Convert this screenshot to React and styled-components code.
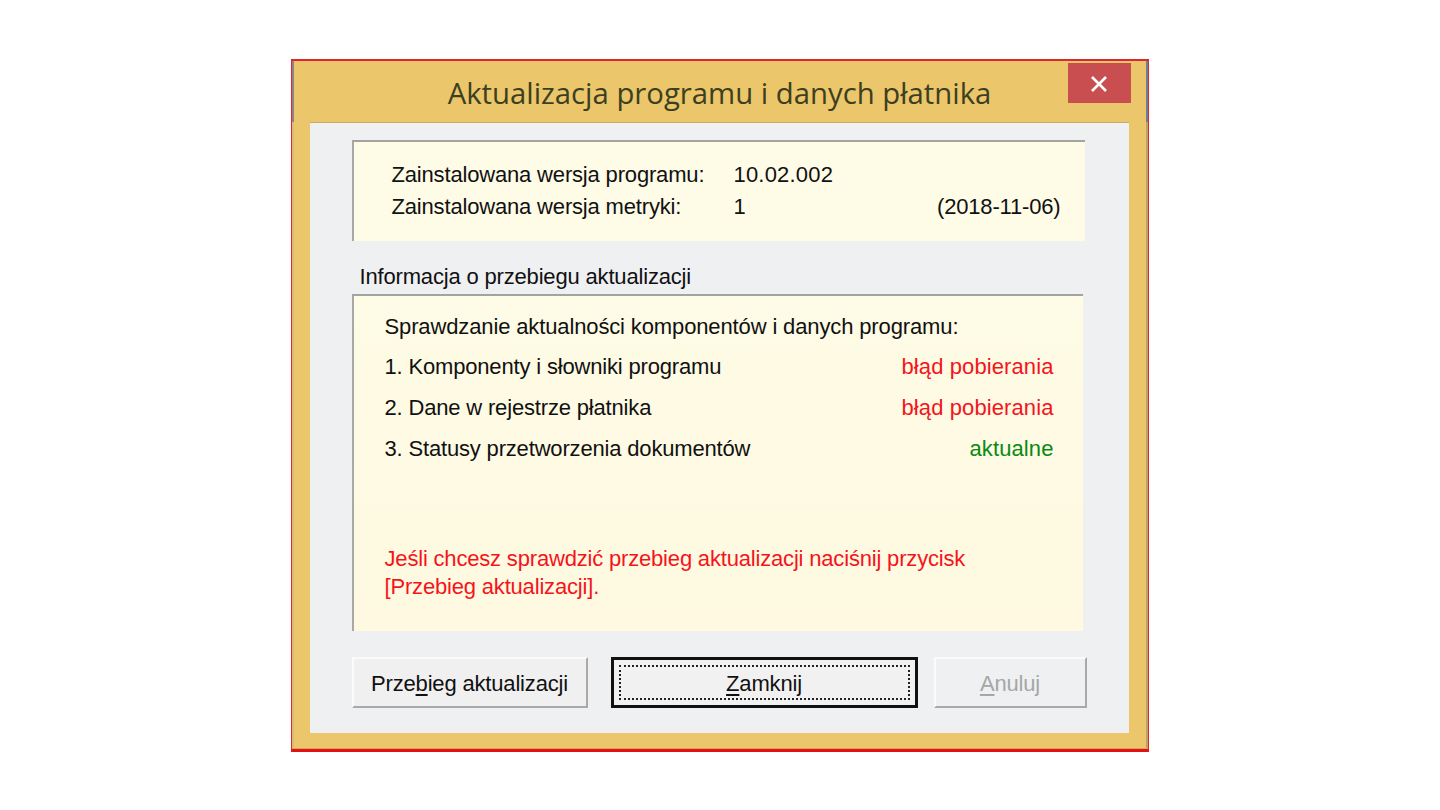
import React from 'react'
import styled, { createGlobalStyle } from 'styled-components'

const Global = createGlobalStyle`
  html, body { margin: 0; padding: 0; background: #fff; }
  body { font-family: "Liberation Sans", Arial, sans-serif; }
`

const Page = styled.div`
  box-sizing: border-box;
  width: 1440px;
  height: 810px;
  padding: 1px 1px 0 0;
  display: flex;
  align-items: center;
  justify-content: center;
`

const Win = styled.div`
  box-sizing: border-box;
  width: 858px;
  height: 693px;
  background: #ecc66a;
  border: 1px solid #e0272b;
  border-top-width: 2px;
  border-bottom-width: 3px;
  border-bottom-color: #e60f14;
  box-shadow: inset 0 -1px 0 #c9a95a, inset -2px 0 0 #b9a566, inset 2px 0 0 #d8bd78;
  display: flex;
  flex-direction: column;
`

const TitleBar = styled.div`
  height: 61px;
  display: grid;
  grid-template-columns: 1fr auto 1fr;
  box-shadow: inset 2px 0 0 #8d8583, inset -2px 0 0 #6f7f99;
`

const Title = styled.h1`
  grid-column: 2;
  margin: 15px 0 0;
  font: 400 29.3px/34px "Open Sans", sans-serif;
  color: #3b4021;
  white-space: nowrap;
`

const Close = styled.div`
  grid-column: 3;
  justify-self: end;
  box-sizing: border-box;
  width: 63px;
  height: 40px;
  margin: 2px 17px 0 0;
  padding-top: 2px;
  background: #c84e50;
  display: flex;
  align-items: center;
  justify-content: center;
`

const Client = styled.div`
  box-sizing: border-box;
  flex: none;
  height: 611px;
  margin: 0 19px 0 18px;
  padding: 17px 0 0 42px;
  background: #eff0f2;
  border-top: 1px solid #c9ab63;
  display: flex;
  flex-direction: column;
`

const Panel = styled.div`
  box-sizing: border-box;
  background: #fefbe6;
  border-top: 2px solid #a3a39f;
  border-left: 2px solid #a8a8a4;
`

const VersionPanel = styled(Panel)`
  width: 733px;
  height: 101px;
  padding: 17px 24px 0 38px;
  display: grid;
  grid-template-columns: 342px 1fr auto;
  grid-auto-rows: 32px;
  align-items: center;
`

const Text = styled.span`
  font-size: 22px;
  letter-spacing: -0.17px;
  line-height: 30px;
  color: #111;
  white-space: nowrap;
`

const Value = styled(Text)`
  letter-spacing: 0.2px;
`

const Status = styled(Text)`
  letter-spacing: 0.1px;
  color: ${p => (p.$ok ? '#0a8a12' : '#f5141c')};
`

const GroupLabel = styled.div`
  font-size: 22px;
  letter-spacing: -0.17px;
  line-height: 30px;
  color: #111;
  margin: 21px 0 2px 8px;
`

const InfoPanel = styled(Panel)`
  width: 731px;
  height: 337px;
  padding: 16px 29px 0 31px;
  background: linear-gradient(#fefbe6, #fef9e0);
  display: flex;
  flex-direction: column;
`

const Heading = styled(Text)`
  margin-bottom: 10px;
  letter-spacing: -0.13px;
`

const Row = styled.div`
  display: flex;
  justify-content: space-between;
  height: 41px;
  align-items: flex-start;
`

const Warning = styled.p`
  margin: 70px 0 0;
  font-size: 22px;
  letter-spacing: -0.18px;
  line-height: 28px;
  color: #f5141c;
`

const Buttons = styled.div`
  display: flex;
  margin-top: 26px;
`

const Button = styled.div`
  box-sizing: border-box;
  width: ${p => p.$w}px;
  height: 51px;
  margin-left: ${p => p.$ml || 0}px;
  padding-top: 2px;
  display: flex;
  align-items: center;
  justify-content: center;
  font-size: 22px;
  letter-spacing: -0.17px;
  color: #111;
  background: #f0f0f0;
  border: 2px solid #fbfbfb;
  border-right-color: #a9a9a9;
  border-bottom-color: #a9a9a9;
  white-space: nowrap;
  ${p => p.$disabled && 'color: #a6a6a6; background: #eff0f2;'}
  u { text-underline-offset: 3px; }
`

const DefaultButton = styled(Button)`
  background: #f1f1f1;
  border: 3px solid #111;
  position: relative;
  &::after {
    content: '';
    position: absolute;
    inset: 5px;
    border: 2px dotted #222;
  }
`

export default function App() {
  return (
    <Page>
      <Global />
      <Win>
        <TitleBar>
          <Title>Aktualizacja programu i danych płatnika</Title>
          <Close>
            <svg width="18" height="16" viewBox="0 0 18 16">
              <path d="M2 1 L16 15 M16 1 L2 15" stroke="#fff" strokeWidth="2.6" fill="none" />
            </svg>
          </Close>
        </TitleBar>
        <Client>
          <VersionPanel>
            <Text>Zainstalowana wersja programu:</Text>
            <Value>10.02.002</Value>
            <span />
            <Text>Zainstalowana wersja metryki:</Text>
            <Value>1</Value>
            <Text>(2018-11-06)</Text>
          </VersionPanel>
          <GroupLabel>Informacja o przebiegu aktualizacji</GroupLabel>
          <InfoPanel>
            <Heading>Sprawdzanie aktualności komponentów i danych programu:</Heading>
            <Row>
              <Text>1. Komponenty i słowniki programu</Text>
              <Status>błąd pobierania</Status>
            </Row>
            <Row>
              <Text>2. Dane w rejestrze płatnika</Text>
              <Status>błąd pobierania</Status>
            </Row>
            <Row>
              <Text>3. Statusy przetworzenia dokumentów</Text>
              <Status $ok>aktualne</Status>
            </Row>
            <Warning>
              Jeśli chcesz sprawdzić przebieg aktualizacji naciśnij przycisk<br />
              [Przebieg aktualizacji].
            </Warning>
          </InfoPanel>
          <Buttons>
            <Button $w={236}>Prze<u>b</u>ieg aktualizacji</Button>
            <DefaultButton $w={307} $ml={23}><u>Z</u>amknij</DefaultButton>
            <Button $w={153} $ml={16} $disabled><u>A</u>nuluj</Button>
          </Buttons>
        </Client>
      </Win>
    </Page>
  )
}
